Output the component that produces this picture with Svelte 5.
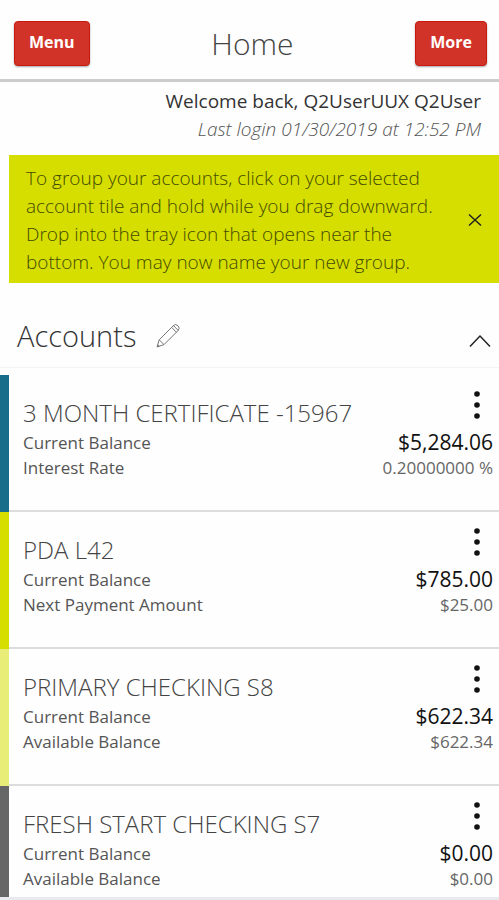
<script lang="ts">
    type Account = {
        name: string;
        tone: string;
        balance: string;
        detailLabel: string;
        detail: string;
    };

    const accounts: Account[] = [
        { name: '3 MONTH CERTIFICATE -15967', tone: 'teal', balance: '$5,284.06', detailLabel: 'Interest Rate', detail: '0.20000000 %' },
        { name: 'PDA L42', tone: 'lime', balance: '$785.00', detailLabel: 'Next Payment Amount', detail: '$25.00' },
        { name: 'PRIMARY CHECKING S8', tone: 'pale', balance: '$622.34', detailLabel: 'Available Balance', detail: '$622.34' },
        { name: 'FRESH START CHECKING S7', tone: 'gray', balance: '$0.00', detailLabel: 'Available Balance', detail: '$0.00' },
    ];

    let showTip = $state(true);
    let expanded = $state(true);
</script>

<header class="topbar">
    <button class="nav-button" type="button">Menu</button>
    <h1>Home</h1>
    <button class="nav-button" type="button">More</button>
</header>

<main>
    <div class="welcome">
        <p class="greeting">Welcome back, Q2UserUUX Q2User</p>
        <p class="last-login">Last login 01/30/2019 at 12:52 PM</p>
    </div>

    {#if showTip}
        <div class="tip">
            <p>
                To group your accounts, click on your selected account tile and hold while you drag downward.
                Drop into the tray icon that opens near the bottom. You may now name your new group.
            </p>
            <button class="icon-button" type="button" aria-label="Dismiss" onclick={() => (showTip = false)}>
                <svg width="14" height="14" viewBox="0 0 14 14">
                    <path d="M1 1.5l12 11M13 1.5l-12 11" />
                </svg>
            </button>
        </div>
    {/if}

    <section>
        <div class="section-head">
            <h2>Accounts</h2>
            <button class="icon-button edit" type="button" aria-label="Edit accounts">
                <svg width="24" height="24" viewBox="0 0 24 24">
                    <path d="M1 23l2.2-7.2L17.2 1.8a3.3 3.3 0 0 1 4.8 0a3.3 3.3 0 0 1 0 4.8L8 20.6z" />
                    <path d="M3.2 15.8l4.8 4.8M15.6 3.4l5 5M17.4 1.6l4.8 4.8M1.8 20.8l1.4 1.4" />
                </svg>
            </button>
            <button
                class="icon-button toggle"
                type="button"
                aria-label="Toggle accounts"
                aria-expanded={expanded}
                onclick={() => (expanded = !expanded)}
            >
                <svg class:flipped={!expanded} width="22" height="14" viewBox="0 0 22 14">
                    <path d="M1 12.5L11 2l10 10.5" />
                </svg>
            </button>
        </div>

        {#if expanded}
            <ul class="accounts">
                {#each accounts as account}
                    <li class="account {account.tone}">
                        <div class="account-head">
                            <h3>{account.name}</h3>
                            <button class="icon-button more" type="button" aria-label="Options for {account.name}">
                                <svg width="6" height="28" viewBox="0 0 6 28">
                                    <circle cx="3" cy="3" r="2.8" />
                                    <circle cx="3" cy="14" r="2.8" />
                                    <circle cx="3" cy="25" r="2.8" />
                                </svg>
                            </button>
                        </div>
                        <div class="line">
                            <span>Current Balance</span>
                            <span class="balance">{account.balance}</span>
                        </div>
                        <div class="line">
                            <span>{account.detailLabel}</span>
                            <span class="detail">{account.detail}</span>
                        </div>
                    </li>
                {/each}
            </ul>
        {/if}
    </section>
</main>

<style>
    :global(body) {
        background: #fefefe;
        color: #333;
        font-family: 'Open Sans', 'Noto Sans', sans-serif;
    }

    h1, h2, h3, p, ul {
        margin: 0;
        padding: 0;
        font-weight: 300;
    }

    button {
        font-family: inherit;
        cursor: pointer;
    }

    .topbar {
        display: flex;
        align-items: center;
        justify-content: space-between;
        padding: 21px 12px 13px 14px;
        border-bottom: 3px solid #ccc;
    }

    .topbar h1 {
        font-size: 30px;
        line-height: 45px;
        color: #444;
    }

    .nav-button {
        height: 45px;
        padding: 0 14px 3px;
        border: 1px solid #c9190f;
        border-radius: 4px;
        background: #d23329;
        box-shadow: 0 1px 2px rgba(0, 0, 0, 0.35);
        color: #fff;
        font-size: 16px;
        font-weight: 700;
    }

    .welcome {
        padding: 5px 18px 12px;
        text-align: right;
    }

    .greeting {
        font-size: 19px;
        line-height: 28px;
        font-weight: 400;
    }

    .last-login {
        font-size: 19px;
        line-height: 28px;
        font-style: italic;
        color: #555;
    }

    .tip {
        display: flex;
        align-items: center;
        justify-content: space-between;
        margin-left: 9px;
        padding: 9px 17px 7px;
        background: #d6de00;
        color: #444a00;
    }

    .tip p {
        max-width: 424px;
        font-size: 19px;
        line-height: 28px;
    }

    .icon-button {
        display: flex;
        padding: 0;
        border: 0;
        background: none;
        color: inherit;
    }

    .icon-button svg {
        fill: none;
        stroke: #222;
        stroke-width: 1.5;
    }

    .section-head {
        display: flex;
        align-items: center;
        padding: 32px 8px 10px 17px;
        border-bottom: 1px solid #f4f4f6;
    }

    .section-head h2 {
        font-size: 29px;
        line-height: 42px;
    }

    .edit {
        margin-left: 20px;
    }

    .icon-button.edit svg {
        stroke: #777;
        stroke-width: 1;
    }

    .toggle {
        margin-left: auto;
        padding-top: 10px;
    }

    .flipped {
        transform: rotate(180deg);
    }

    .accounts {
        padding-top: 7px;
        border-bottom: 3px solid #e9eaee;
        list-style: none;
    }

    .account {
        padding: 16px 6px 32px 14px;
        border-left: 9px solid;
        box-shadow: inset 0 -2px #ddd;
    }

    .account:last-child {
        padding-bottom: 6px;
        box-shadow: none;
    }

    .teal {
        border-color: #176d8a;
    }

    .lime {
        border-color: #d6de00;
    }

    .pale {
        border-color: #e8ed78;
    }

    .gray {
        border-color: #666;
    }

    .account-head {
        display: flex;
        justify-content: space-between;
    }

    .account-head h3 {
        padding-top: 4px;
        font-size: 24px;
        line-height: 35px;
        color: #444;
    }

    .more {
        padding-right: 13px;
    }

    .icon-button.more svg {
        fill: #111;
        stroke: none;
    }

    .line {
        display: flex;
        align-items: center;
        justify-content: space-between;
        font-size: 17px;
        font-weight: 400;
        line-height: 25px;
        color: #555;
    }

    .balance {
        font-size: 21px;
        font-weight: 500;
        color: #111;
    }

    .detail {
        color: #666;
    }
</style>
